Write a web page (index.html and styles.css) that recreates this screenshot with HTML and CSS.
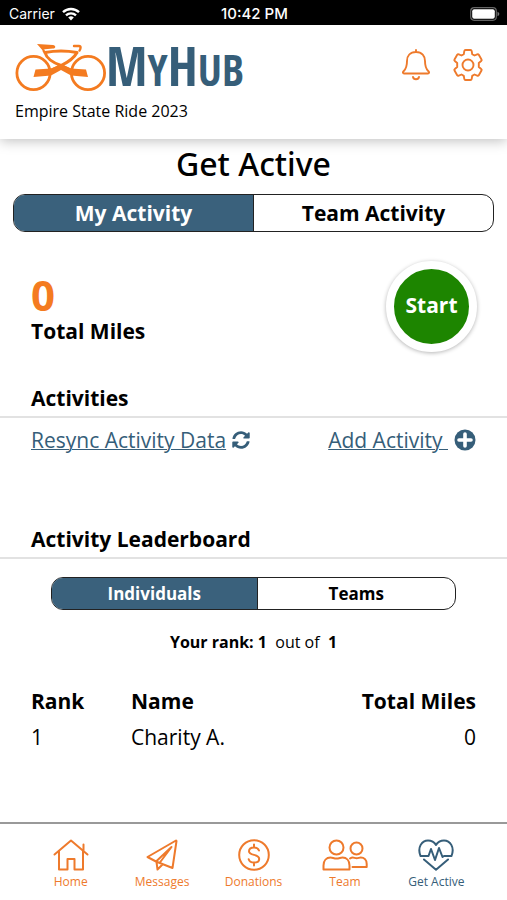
FILE: index.html
```html
<!DOCTYPE html>
<html lang="en">
<head>
  <meta charset="UTF-8" />
  <meta name="viewport" content="width=device-width, initial-scale=1" />
  <title>MyHub - Get Active</title>
  <link rel="stylesheet" href="styles.css">
</head>
<body>

  <!-- status bar -->
  <div class="status-bar">
    <div class="carrier">
      <span>Carrier</span>
      <svg width="18" height="14" viewBox="0 0 18 14" fill="none" stroke="#fff" stroke-width="2.4">
        <path d="M1 5.2a11.5 11.5 0 0 1 16 0" />
        <path d="M4 8.4a7.2 7.2 0 0 1 10 0" />
        <path d="M9 13.4 6.2 10.6a4 4 0 0 1 5.6 0z" fill="#fff" stroke="none" />
      </svg>
    </div>
    <span class="clock">10:42 PM</span>
    <svg class="battery" width="30" height="14" viewBox="0 0 30 14">
      <rect x="0.7" y="0.7" width="25.6" height="12.6" rx="3.5" fill="none" stroke="#666" stroke-width="1.2" />
      <rect x="2.2" y="2.2" width="22.6" height="9.6" rx="2" fill="#fff" />
      <path d="M27.5 4.8c2.4.8 2.4 3.6 0 4.4z" fill="#777" />
    </svg>
  </div>

  <header class="header">
    <div class="header-row">
      <div class="logo">
        <svg width="91" height="49" viewBox="0 0 91 49" fill="none" stroke="#f47b20">
          <circle cx="18.5" cy="30" r="16.600" stroke-width="2.800" />
          <circle cx="73" cy="30" r="16.600" stroke-width="2.800" />
          <path d="M22 1l16 1c3 .5 3 3.500 0 3.600l-8 .6-2.500 1z" fill="#f47b20" stroke="none" />
          <path d="M28 7l3 4" stroke-width="2.200" />
          <path d="M30 9.500Q46 6.500 62 9.500" stroke-width="3" stroke-linecap="round" />
          <path d="M59 3h5c2.200 0 1.800 2.800.5 4.600" stroke-width="2.400" stroke-linecap="round" />
          <path d="M30 9.500Q32 17.500 46 22.500L64 31M62 9.500Q58 17 46 22.500L28 31" stroke-width="3" />
          <path d="M20.500 26.500L36 25.500 46 21.500 56 25.500 71 26.500 73 34 56 32.500 46 27 36 32.500 18.500 34z" fill="#f47b20" stroke="none" />
        </svg>
        <span class="logo-text">M<small>Y</small>H<small>UB</small></span>
      </div>
      <div class="header-actions">
        <button class="icon-button" aria-label="Notifications">
          <svg width="28" height="32" viewBox="0 0 28 32" fill="none" stroke="#ee7a2c" stroke-width="1.900" stroke-linecap="round" stroke-linejoin="round">
            <path d="M14 1v2M14 3c-6 0-9 4-9 9 0 6-1 8-3.400 10.200-1.200 1.300-.6 2.300.4 2.300h24c1 0 1.600-1 .4-2.300C24 20 23 18 23 12c0-5-3-9-9-9z" />
            <path d="M11 28c.5 3 5.500 3 6 0" />
          </svg>
        </button>
        <button class="icon-button" aria-label="Settings">
          <svg width="32" height="32" viewBox="0 0 32 32" fill="none" stroke="#ee7a2c" stroke-width="1.900" stroke-linejoin="round">
            <path d="M13.500 1h5q1 0 1.200 1.200l.5 3 2.300 1.300 2.700-1.200q1-.4 1.600.5l2.700 4.600q.5 1-.3 1.600L26.800 14v4l2.400 2q.8.600.3 1.600l-2.700 4.600q-.6.9-1.600.5L22.500 25.500l-2.300 1.300-.5 3q-.2 1.200-1.200 1.200h-5q-1 0-1.200-1.200l-.5-3-2.300-1.300-2.700 1.200q-1 .4-1.600-.5L2.500 21.600q-.5-1 .3-1.600l2.400-2v-4L2.800 12q-.8-.6-.3-1.600l2.700-4.600q.6-.9 1.600-.5l2.700 1.200 2.300-1.300.5-3Q12.500 1 13.500 1z" />
            <circle cx="16" cy="16" r="5.500" />
          </svg>
        </button>
      </div>
    </div>
    <div class="event-name">Empire State Ride 2023</div>
  </header>

  <main>
    <h1 class="page-title">Get Active</h1>

    <div class="tabs">
      <button class="tab active">My Activity</button>
      <button class="tab">Team Activity</button>
    </div>

    <section class="summary">
      <div class="miles">
        <div class="miles-value">0</div>
        <div class="miles-label">Total Miles</div>
      </div>
      <button class="start-button">Start</button>
    </section>

    <h2 class="section-title">Activities</h2>
    <div class="activity-links">
      <div class="activity-link">
        <a href="#">Resync Activity Data</a>
        <svg width="18" height="18" viewBox="0 0 512 512" fill="#365e79">
          <path d="M370.700 133.300C339.500 104 298.900 88 255.800 88c-77.500.1-144.300 53.200-162.800 126.900-1.300 5.400-6.100 9.100-11.700 9.100H24.100c-7.500 0-13.200-6.800-11.800-14.200C33.900 94.900 134.800 8 256 8c66.400 0 126.800 26.100 171.300 68.700L463 41c15.100-15.100 41-4.400 41 17v134c0 13.300-10.700 24-24 24H346c-21.400 0-32.100-25.900-17-41l41.700-41.700zM32 296h134c21.400 0 32.100 25.900 17 41l-41.800 41.800c31.300 29.300 71.800 45.300 115 45.300 77.400-.1 144.300-53.100 162.800-126.800 1.300-5.400 6.100-9.100 11.700-9.100h57.300c7.500 0 13.200 6.800 11.800 14.200C478.100 417.100 377.200 504 256 504c-66.400 0-126.800-26.100-171.300-68.700L49 471c-15.100 15.100-41 4.400-41-17V320c0-13.300 10.700-24 24-24z" />
        </svg>
      </div>
      <div class="activity-link">
        <a href="#">Add Activity&nbsp;</a>
        <svg width="22" height="22" viewBox="0 0 22 22">
          <circle cx="11" cy="11" r="10.500" fill="#365e79" />
          <path d="M11 5v12M5 11h12" stroke="#fff" stroke-width="3.600" stroke-linecap="round" />
        </svg>
      </div>
    </div>

    <h2 class="section-title">Activity Leaderboard</h2>
    <div class="tabs tabs-small">
      <button class="tab active">Individuals</button>
      <button class="tab">Teams</button>
    </div>

    <p class="your-rank"><b>Your rank: 1</b>&nbsp; out of &nbsp;<b>1</b></p>

    <table class="leaderboard">
      <thead>
        <tr>
          <th class="rank">Rank</th>
          <th>Name</th>
          <th class="total">Total Miles</th>
        </tr>
      </thead>
      <tbody>
        <tr>
          <td class="rank">1</td>
          <td>Charity A.</td>
          <td class="total">0</td>
        </tr>
      </tbody>
    </table>
  </main>

  <!-- bottom navigation -->
  <nav class="bottom-nav">
    <a href="#" class="nav-item">
      <svg width="36" height="32" viewBox="0 0 36 32">
        <path d="M1.500 15.500L18 1.500l16.500 14M30.500 11.500V5.500M6 12v18.500h8.500V20h7v10.500H30V12" />
      </svg>
      <span>Home</span>
    </a>
    <a href="#" class="nav-item">
      <svg width="32" height="32" viewBox="0 0 32 32">
        <path d="M30 1.500L1.500 18l8.500 4.500L26.500 29 30.500 2zM10 22.500L25.500 8 13.500 24M10.500 23l1 7.500 5-5" />
      </svg>
      <span>Messages</span>
    </a>
    <a href="#" class="nav-item">
      <svg width="32" height="32" viewBox="0 0 32 32">
        <circle cx="16" cy="16" r="14.800" />
        <path d="M21 11.500c-.8-2-2.600-3-5-3-3 0-5 1.500-5 3.700 0 2.300 2 3 5 3.700s5.200 1.500 5.200 4c0 2.200-2.200 3.600-5.200 3.600-2.700 0-4.700-1.200-5.300-3.300M16 5.500v3M16 23.500v3" />
      </svg>
      <span>Donations</span>
    </a>
    <a href="#" class="nav-item">
      <svg width="46" height="32" viewBox="0 0 46 32">
        <circle cx="14.500" cy="8.500" r="7" />
        <circle cx="34.500" cy="9.500" r="6" />
        <path d="M1.500 30.500v-4c0-5 3-8 7-8 2 0 3.500 1 6 1s4-1 6-1c4 0 7 3 7 8v4zM28 19.500c1-.7 1.500-1 2.700-1 1.500 0 2.300.8 4 .8s2.500-.8 4-.8c3.500 0 6 2.500 6 6.500v3H30.500" />
      </svg>
      <span>Team</span>
    </a>
    <a href="#" class="nav-item current">
      <svg width="36" height="32" viewBox="0 0 36 32">
        <path d="M2.500 17h8l2.500-7 4 11 4-12 3.500 9 1.500-1h7.500M2.500 17C-1 8 4 1.500 10 1.500c3.500 0 6.200 1.500 8 4.500 1.800-3 4.500-4.500 8-4.500 6 0 11 6.500 7.500 15.500M6 20.500l12 10.300 12-10.300" />
      </svg>
      <span>Get Active</span>
    </a>
  </nav>

</body>
</html>
```
FILE: styles.css
```css
* {
  box-sizing: border-box;
}

body {
  display: flex;
  flex-direction: column;
  min-height: 100vh;
  margin: 0;
  background: #fff;
  color: #000;
  font-family: "Open Sans", sans-serif;
  font-size: 21px;
}

button {
  padding: 0;
  border: 0;
  background: none;
  color: inherit;
  font: inherit;
  cursor: pointer;
}

svg {
  display: block;
}

/* status bar */
.status-bar {
  display: grid;
  grid-template-columns: 1fr auto 1fr;
  align-items: center;
  height: 25px;
  padding: 2px 7px 0 9px;
  background: #000;
  color: #fff;
  font-family: Inter, sans-serif;
  font-size: 14px;
}

.carrier {
  display: flex;
  align-items: center;
  gap: 7px;
}

.clock {
  font-size: 15px;
  font-weight: 500;
}

.battery {
  justify-self: end;
}

/* header */
.header {
  padding: 18px 23px 16px 15px;
  box-shadow: 0 2px 12px rgba(0, 0, 0, 0.25);
}

.header-row {
  display: flex;
  justify-content: space-between;
  height: 49px;
}

.logo {
  display: flex;
  align-items: center;
}

.logo-text {
  color: #365e79;
  font-family: "Liberation Sans Narrow", "Open Sans Condensed", "Roboto Condensed", "Liberation Sans", sans-serif;
  font-size: 53px;
  font-weight: bold;
  line-height: 49px;
}

.logo-text small {
  font-size: 43px;
}

.header-actions {
  display: flex;
  gap: 22px;
  padding-top: 6px;
}

.icon-button {
  height: 32px;
}

.event-name {
  margin-top: 7px;
  font-size: 16px;
  line-height: 24px;
}

/* page */
.page-title {
  margin: 0 0 5px;
  font-family: "Noto Sans", "Open Sans", sans-serif;
  font-size: 32px;
  font-weight: 500;
  line-height: 50px;
  text-align: center;
}

.tabs {
  display: flex;
  height: 38px;
  margin: 0 13px;
  border: 1px solid #222;
  border-radius: 12px;
  overflow: hidden;
}

.tab {
  flex: 1;
  font-weight: bold;
}

.tab.active {
  border-right: 1px solid #222;
  background: #3a617c;
  color: #fff;
}

.tabs-small {
  height: 33px;
  margin: 18px 51px 0;
  font-size: 17px;
}

.tabs-small .active {
  flex: 0 0 51%;
}

.summary {
  display: flex;
  justify-content: space-between;
  align-items: flex-end;
  padding: 29px 30px 0 31px;
}

.miles {
  margin-bottom: 5px;
  font-weight: bold;
}

.miles-value {
  color: #f47b20;
  font-size: 42px;
  line-height: 40px;
}

.miles-label {
  line-height: 32px;
}

.start-button {
  width: 91px;
  height: 91px;
  padding-bottom: 4px;
  border: 8px solid #fff;
  border-radius: 50%;
  background: #1d8500;
  box-shadow: 0 1px 4px rgba(0, 0, 0, 0.3);
  color: #fff;
  font-weight: bold;
}

.section-title {
  margin: 29px 0 0;
  padding: 0 31px 1px;
  border-bottom: 2px solid #e2e2e2;
  font-size: 21px;
  line-height: 34px;
}

.activity-links {
  display: flex;
  justify-content: space-between;
  padding: 6px 31px 37px;
}

.activity-link {
  display: flex;
  align-items: center;
  gap: 6px;
  line-height: 32px;
}

.activity-link a {
  color: #365e79;
  text-decoration-thickness: 1px;
}

.your-rank {
  margin: 20px 0 29px;
  font-size: 16px;
  line-height: 24px;
  text-align: center;
}

.leaderboard {
  width: 100%;
  border-collapse: collapse;
  line-height: 36px;
}

.leaderboard th,
.leaderboard td {
  padding: 0;
  text-align: left;
}

.leaderboard .rank {
  width: 131px;
  padding-left: 31px;
}

.leaderboard .total {
  padding-right: 31px;
  text-align: right;
}

/* bottom navigation */
.bottom-nav {
  display: flex;
  margin-top: auto;
  padding: 15px 25px 10px;
  border-top: 2px solid #999;
}

.nav-item {
  display: flex;
  flex: 1;
  flex-direction: column;
  align-items: center;
  gap: 3px;
  color: #ee7a2c;
  font-size: 12px;
  line-height: 16px;
  text-decoration: none;
}

.nav-item svg {
  fill: none;
  stroke: currentColor;
  stroke-width: 2;
  stroke-linejoin: round;
  stroke-linecap: round;
}

.nav-item.current {
  color: #365e79;
}
```
